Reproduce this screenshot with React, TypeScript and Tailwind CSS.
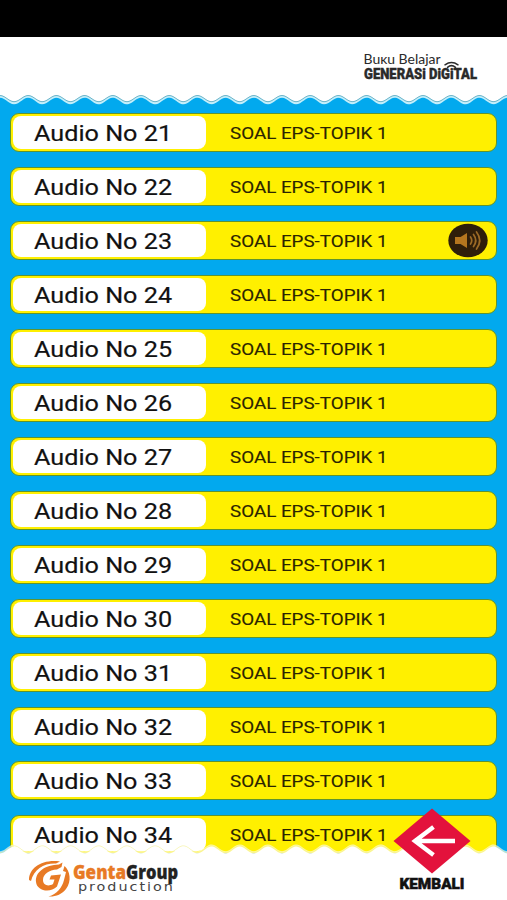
import React from 'react'

type AudioItem = {
  no: number
  title: string
  playing?: boolean
}

const items: AudioItem[] = Array.from({ length: 14 }, (_, i) => ({
  no: 21 + i,
  title: 'SOAL EPS-TOPIK 1',
  playing: 21 + i === 23,
}))

// One scallop every 28.2px, sampled as a polyline
function wave(mid: number, amp: number) {
  const pts: string[] = []
  for (let x = 0; x <= 508; x += 2) {
    const y = mid - amp * Math.cos((2 * Math.PI * x) / 28.2)
    pts.push(`${x} ${y.toFixed(2)}`)
  }
  return 'M' + pts.join('L')
}

function TopWave() {
  return (
    <svg className="block h-[14px] w-full shrink-0" viewBox="0 0 507 14">
      <path d={`${wave(8, 3.3)}V0H0Z`} fill="#c4effb" />
      <path d={`${wave(5.4, 3.1)}V0H0Z`} fill="#fff" />
      <path d={wave(5.6, 3.1)} fill="none" stroke="#6db4c9" strokeWidth="1" />
    </svg>
  )
}

function BottomWave() {
  return (
    <svg className="block h-[14px] w-full shrink-0" viewBox="0 0 507 14">
      <path d={`${wave(4.8, -3.4)}V14H0Z`} fill="#fff" fillOpacity="0.6" />
      <path d={wave(6.2, -3.4)} fill="none" stroke="#f3ee8a" strokeOpacity="0.7" strokeWidth="0.8" />
      <path d={`${wave(7, -3.4)}V14H0Z`} fill="#fff" />
    </svg>
  )
}

function BookLogo() {
  return (
    <svg className="h-[40px] w-[124px]" viewBox="360 50 124 40">
      <g fill="#2a2a2a">
        <text x="363.5" y="63.5" fontFamily="Lato, sans-serif" fontSize="12.5" textLength="77" lengthAdjust="spacingAndGlyphs">
          Buĸu Belajar
        </text>
        <text x="364" y="78.8" fontFamily="Roboto, sans-serif" fontWeight="900" fontSize="14.5" stroke="#2a2a2a" strokeWidth="0.4" textLength="113" lengthAdjust="spacingAndGlyphs">
          GENERASi DiGiTAL
        </text>
      </g>
      <g fill="none" stroke="#2a2a2a" strokeWidth="1.5" strokeLinecap="round">
        <path d="M445 64.8Q451.5 60.2 458 64.8" />
        <path d="M447.5 67.3Q451.5 64 455.5 67.3" />
      </g>
    </svg>
  )
}

function SpeakerBadge() {
  return (
    <svg className="absolute right-[8px] top-[1px] h-[35px] w-[40px]" viewBox="0 0 40 34">
      <ellipse cx="20" cy="17" rx="19.7" ry="16.8" fill="#2f1e0a" />
      <path d="M7 13.5H12.5L19 9.5V24.5L12.5 20.5H7Z" fill="#b5761f" />
      <g fill="none" stroke="#9c6a26" strokeWidth="1.7" strokeLinecap="round">
        <path d="M22.5 13.5Q25 17 22.5 20.5" />
        <path d="M25.5 11Q30 17 25.5 23" />
        <path d="M28.5 8.5Q35 17 28.5 25.5" />
      </g>
    </svg>
  )
}

function AudioRow({ item }: { item: AudioItem }) {
  return (
    <div className="relative flex h-[39px] shrink-0 items-center rounded-[9px] border border-[#5f9430] bg-[#fff000] pl-[2px]">
      <div className="flex h-[33px] w-[193px] items-center rounded-[8px] bg-white pl-[21px] pt-[3px]">
        <span className="origin-left scale-x-[1.145] whitespace-nowrap text-[22px] leading-none text-[#111] [-webkit-text-stroke:0.2px_#111]">
          Audio No {item.no}
        </span>
      </div>
      <span className="ml-[24px] mt-[2px] origin-left scale-x-[1.105] whitespace-nowrap text-[17px] leading-none text-[#2b2400] [-webkit-text-stroke:0.15px_#2b2400]">
        {item.title}
      </span>
      {item.playing && <SpeakerBadge />}
    </div>
  )
}

function GentaLogo() {
  return (
    <svg className="h-[44px] w-[160px]" viewBox="24 856 160 44">
      <g fill="#e87a25">
        <path d="M29 880C29 868 42 859 60 861.5L56 863.5C44 863 34 869 31 881Z" />
        <path d="M59 864.5L62.5 862.5L61.5 867L57 869.5C49 870 43 874 43 880C43 885 48 887 53 884L54.5 879.5H49.5L51 875.5L61 874.5L57 886.5C50 893.5 37 891 36 882C35 872 45 865 59 864.5Z" />
        <path d="M64.5 866C70 871 72 881 66 889C62 894.5 55 897 48.5 896.5C57 894 62 888 64 880L66 872L63 871Z" />
      </g>
      <text x="73" y="879" fontFamily="'Open Sans', sans-serif" fontWeight="800" fontSize="18.5" fill="#e87a25" stroke="#e87a25" strokeWidth="0.3" textLength="53" lengthAdjust="spacingAndGlyphs">
        Genta
      </text>
      <text x="126" y="879" fontFamily="'Open Sans', sans-serif" fontWeight="800" fontSize="18.5" fill="#222" stroke="#222" strokeWidth="0.3" textLength="52" lengthAdjust="spacingAndGlyphs">
        Group
      </text>
      <text transform="translate(78 891) scale(1.2 1)" fontFamily="'DejaVu Sans', sans-serif" fontSize="12" fill="#444" textLength="79" lengthAdjust="spacing">
        production
      </text>
    </svg>
  )
}

function BackButton() {
  return (
    <button className="absolute bottom-[9px] right-[32px] flex w-[86px] flex-col items-center">
      <svg className="h-[66px] w-[78px]" viewBox="0 0 78 66">
        <path d="M39 0.5L77.5 33L39 65.5L0.5 33Z" fill="#e3123c" />
        <path d="M62 33H22M40.5 19L22 33L40.5 47" fill="none" stroke="#fff" strokeWidth="4.4" />
      </svg>
      <svg className="mt-[3px] h-[14px] w-[70px]" viewBox="0 0 70 14">
        <text x="2.5" y="11.5" fontFamily="Roboto, sans-serif" fontWeight="900" fontSize="14.5" fill="#111" stroke="#111" strokeWidth="0.5" textLength="65" lengthAdjust="spacingAndGlyphs">
          KEMBALI
        </text>
      </svg>
    </button>
  )
}

export default function App() {
  return (
    <div className="relative flex h-[900px] w-full flex-col overflow-hidden bg-[#02a9ee] font-['Roboto',sans-serif]">
      {/* Status bar */}
      <div className="h-[37px] shrink-0 bg-black" />

      {/* Header */}
      <header className="flex h-[56px] shrink-0 items-start justify-end bg-white pr-[23px] pt-[13px]">
        <BookLogo />
      </header>
      <TopWave />

      {/* Audio list */}
      <main className="flex min-h-0 flex-1 flex-col gap-[15.05px] overflow-hidden px-[10px] pt-[5.5px]">
        {items.map((item) => (
          <AudioRow key={item.no} item={item} />
        ))}
      </main>

      {/* Footer */}
      <footer className="absolute inset-x-0 bottom-0 flex flex-col">
        <BottomWave />
        <div className="h-[43px] bg-white pl-[24px]">
          <div className="-mt-[1px]">
            <GentaLogo />
          </div>
        </div>
        <BackButton />
      </footer>
    </div>
  )
}
